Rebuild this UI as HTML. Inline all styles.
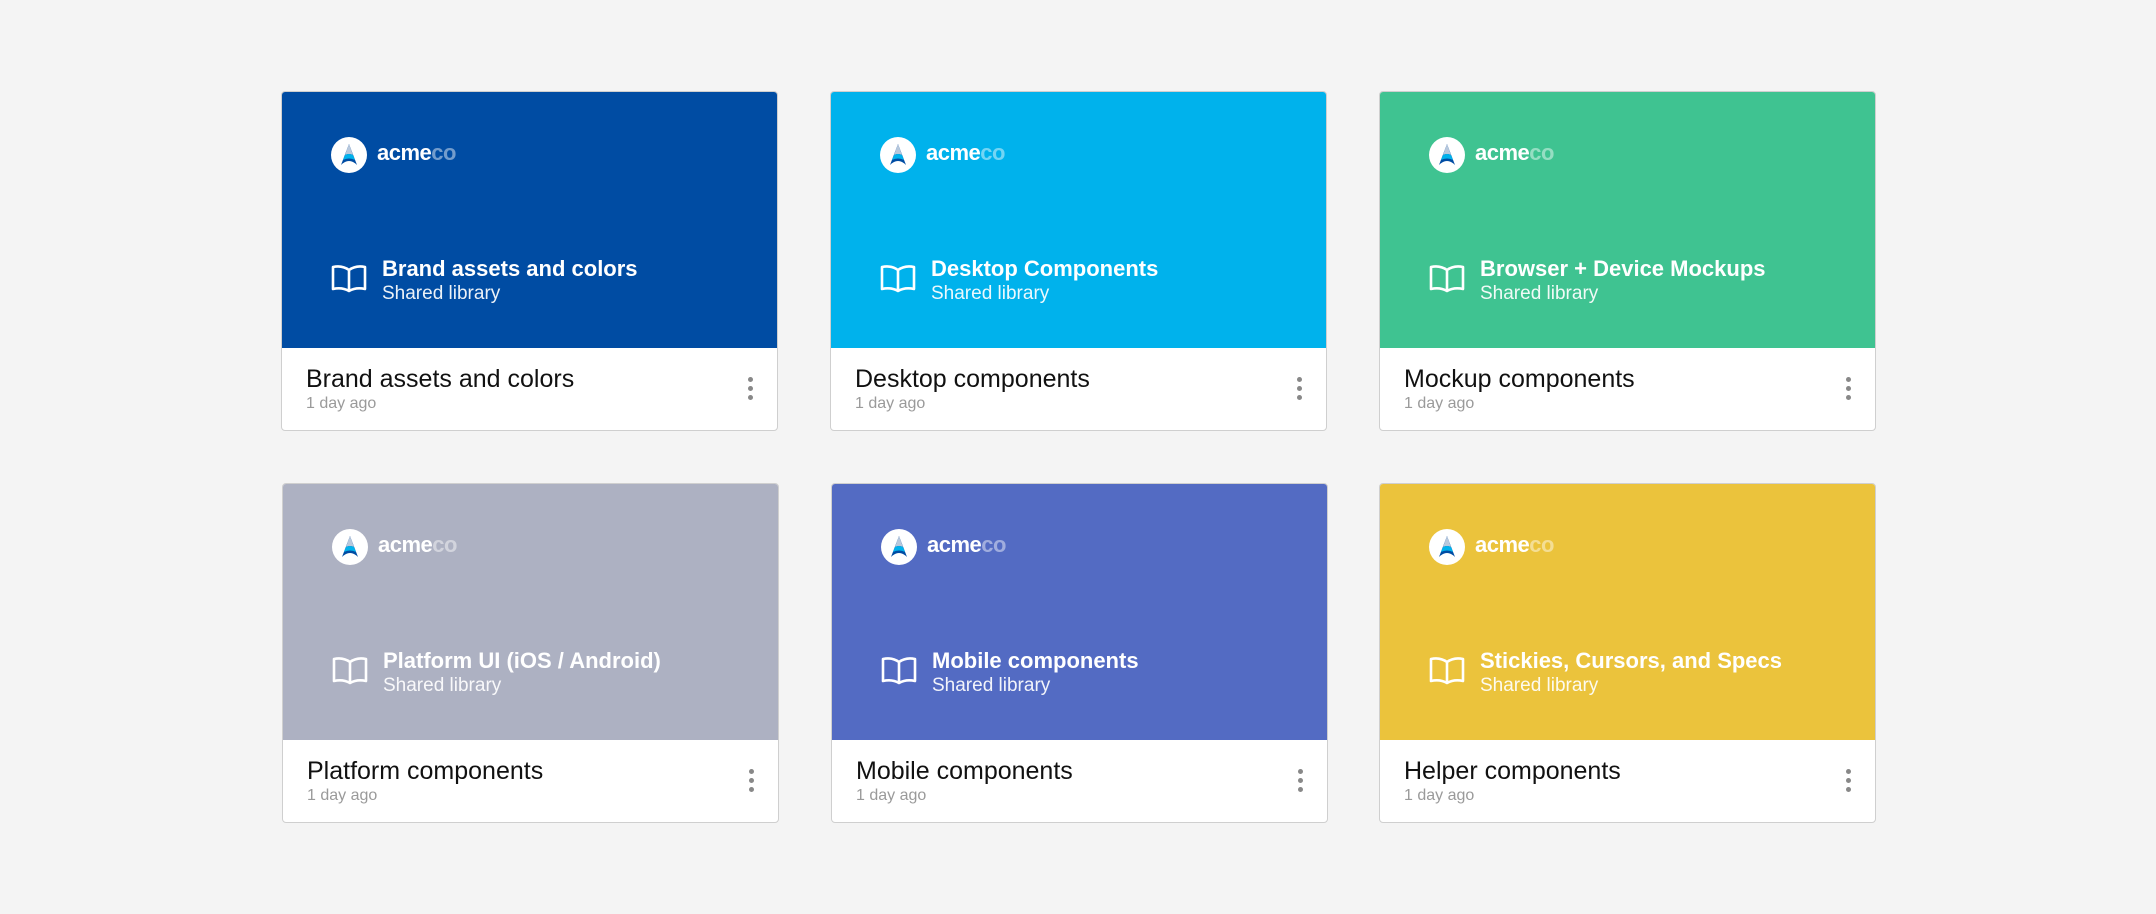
<!DOCTYPE html>
<html><head><meta charset="utf-8"><style>
body{margin:0;width:2156px;height:914px;background:#f4f4f4;position:relative;overflow:hidden;font-family:"Liberation Sans",Arial,sans-serif}
.card{position:absolute;width:495px;height:338px;border:1px solid #cfcfcf;border-radius:4px;background:#fff;overflow:hidden}
.hd{position:absolute;left:0;top:0;width:100%;height:256px}
.logo{position:absolute;left:49px;top:45px;width:36px;height:36px}
.brand{position:absolute;left:95px;top:48px;font-size:22px;font-weight:bold;color:#fff;letter-spacing:-0.5px}
.brand span{color:rgba(255,255,255,.45)}
.book{position:absolute;left:49px;top:172px}
.t1{position:absolute;left:100px;top:164px;font-size:22px;font-weight:bold;color:#fff;white-space:nowrap}
.t2{position:absolute;left:100px;top:191px;font-size:19px;color:#fff;opacity:.92}
.ft{position:absolute;left:24px;top:273px;font-size:25px;color:#111}
.dt{position:absolute;left:24px;top:303px;font-size:16px;color:#9a9a9a}
.dots{position:absolute;right:24px;top:285px;width:5px}
.dots i{display:block;width:5px;height:5px;border-radius:50%;background:#888;margin-bottom:4px}
</style></head><body>
<script>
const cards=[
[281,91,'#004ca3','Brand assets and colors','Brand assets and colors'],
[830,91,'#00b2ec','Desktop Components','Desktop components'],
[1379,91,'#3fc391','Browser + Device Mockups','Mockup components'],
[282,483,'#adb1c2','Platform UI (iOS / Android)','Platform components'],
[831,483,'#536bc3','Mobile components','Mobile components'],
[1379,483,'#ebc33c','Stickies, Cursors, and Specs','Helper components']];
for(const [x,y,c,a,b] of cards){document.write(`<div class="card" style="left:${x}px;top:${y}px"><div class="hd" style="background:${c}">
<svg class="logo" viewBox="0 0 36 36"><circle cx="18" cy="18" r="18" fill="#fff"/><path d="M18 7 L10 28 Q14 24 18 24 Q22 24 26 28 Z" fill="#004ca3"/><path d="M18 7 L14 18 Q18 16 22 18 Z" fill="#b8c8dc"/><path d="M14 18 L12 23 Q18 20 24 23 L22 18 Q18 16 14 18Z" fill="#00b2ec"/></svg>
<div class="brand">acme<span>co</span></div>
<svg class="book" width="36" height="30" viewBox="0 0 36 30" fill="none" stroke="#fff" stroke-width="2.6" stroke-linejoin="round"><path d="M18 6 Q11 1 2 3 V25 Q11 23 18 27 Q25 23 34 25 V3 Q25 1 18 6 Z M18 6 V27"/></svg>
<div class="t1">${a}</div><div class="t2">Shared library</div></div>
<div class="ft">${b}</div><div class="dt">1 day ago</div><div class="dots"><i></i><i></i><i></i></div></div>`)}
</script>
</body></html>
